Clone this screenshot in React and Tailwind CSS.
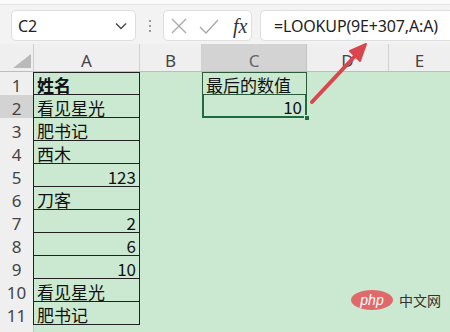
export default function App() {
  const rows = [
    { a: '姓名', bold: true },
    { a: '看见星光' },
    { a: '肥书记' },
    { a: '西木' },
    { a: '123', num: true },
    { a: '刀客' },
    { a: '2', num: true },
    { a: '6', num: true },
    { a: '10', num: true },
    { a: '看见星光' },
    { a: '肥书记' },
  ];
  const cjk = { fontFamily: '"Noto Sans CJK SC", "Noto Sans", sans-serif' };
  return (
    <div className="relative w-[450px] h-[332px] overflow-hidden bg-[#cbe8d0]" style={cjk}>
      {/* formula bar */}
      <div className="h-[44px] bg-[#f3f3f3] border-t-[4px] border-[#fafafa] flex items-start pt-[6px] pl-[11px] shadow-[inset_0_1px_0_#e4e4e4]">
        <div className="w-[125px] h-[31px] bg-white rounded-[5px] border border-[#dedede] flex items-center justify-between pl-[6px] pr-[8px]">
          <span className="text-[16px] text-[#222]" style={{ fontFamily: '"Noto Sans", sans-serif' }}>C2</span>
          <svg width="12" height="8" viewBox="0 0 12 8"><path d="M1 1.5 L6 6.5 L11 1.5" fill="none" stroke="#444" strokeWidth="1.3" /></svg>
        </div>
        <div className="w-[27px] h-[31px] flex flex-col items-center justify-center gap-[3px]">
          <div className="w-[2px] h-[2px] bg-[#9a9a9a]" />
          <div className="w-[2px] h-[2px] bg-[#9a9a9a]" />
          <div className="w-[2px] h-[2px] bg-[#9a9a9a]" />
        </div>
        <div className="w-[89px] h-[31px] bg-white rounded-[5px] border border-[#dedede] flex items-center pl-[7px]">
          <svg width="16" height="16" viewBox="0 0 16 16"><path d="M1 1 L15 15 M15 1 L1 15" stroke="#a8a8a8" strokeWidth="1.3" fill="none" /></svg>
          <svg className="ml-[12px]" width="20" height="16" viewBox="0 0 20 16"><path d="M1 9 L7 15 L19 2" stroke="#a8a8a8" strokeWidth="1.3" fill="none" /></svg>
          <span className="ml-[14px] text-[20px] italic text-[#333] leading-none" style={{ fontFamily: '"Liberation Serif", serif' }}>fx</span>
        </div>
        <div className="ml-[8px] flex-1 h-[31px] bg-white rounded-l-[5px] border border-r-0 border-[#dedede] flex items-center pl-[13px]">
          <span className="text-[16px] text-[#222] tracking-[-0.15px]" style={{ fontFamily: '"Noto Sans", sans-serif' }}>=LOOKUP(9E+307,A:A)</span>
        </div>
      </div>

      {/* column headers */}
      <div className="flex h-[28px] bg-[#efefef] border-b border-[#bdbdbd] text-[17px] text-[#444] leading-[20px]" style={{ fontFamily: '"Noto Sans", sans-serif' }}>
        <div className="w-[34px] border-r border-[#d0d0d0] relative">
          <svg className="absolute right-[2px] bottom-[3px]" width="18" height="14" viewBox="0 0 18 14"><path d="M18 0 L18 14 L0 14 Z" fill="#b9b9b9" /></svg>
        </div>
        <div className="w-[106px] border-r border-[#d0d0d0] flex items-center justify-center pt-[6px]">A</div>
        <div className="w-[62px] border-r border-[#d0d0d0] flex items-center justify-center pt-[6px]">B</div>
        <div className="w-[105px] bg-[#d3d3d3] border-r border-[#c4c4c4] flex items-center justify-center pt-[6px] text-[#666]">C</div>
        <div className="w-[82px] border-r border-[#d0d0d0] flex items-center justify-center pt-[6px]">D</div>
        <div className="flex-1 flex items-center justify-center pt-[6px]">E</div>
      </div>

      {/* rows */}
      {rows.map((r, i) => (
        <div key={i} className="flex h-[23px]">
          <div
            className={`w-[34px] flex items-center justify-center pt-[4px] text-[17px] leading-[18px] text-[#444] border-r border-[#222] ${i === 1 ? 'bg-[#d3d3d3]' : 'bg-[#efefef]'}`}
            style={{ fontFamily: '"Noto Sans", sans-serif' }}
          >
            {i + 1}
          </div>
          <div
            className={`w-[106px] border-r border-b border-[#222] flex items-center pt-[3px] px-[3px] text-[17px] text-[#111] leading-[18px] ${i === 0 ? 'border-t font-bold' : ''} ${r.num ? 'justify-end' : 'justify-start'}`}
          >
            {r.a}
          </div>
          <div className="w-[62px]" />
          {i === 0 ? (
            <div className="w-[105px] border border-[#2e5a3c] flex items-center pt-[3px] px-[3px] text-[17px] text-[#111] leading-[18px]">最后的数值</div>
          ) : i === 1 ? (
            <div className="w-[105px] relative border-2 border-t-0 border-[#1e6b3e] flex items-center justify-end pt-[2px] px-[3px] text-[17px] text-[#111] leading-[18px]">
              10
              <div className="absolute right-[-5px] bottom-[-5px] w-[6px] h-[6px] bg-[#1e6b3e] border border-[#cbe8d0]" />
            </div>
          ) : (
            <div className="w-[105px]" />
          )}
          <div className="flex-1" />
        </div>
      ))}
      <div className="flex h-[7px]">
        <div className="w-[34px] bg-[#efefef] border-r border-[#c4c4c4]" />
      </div>

      {/* arrow */}
      <svg className="absolute left-0 top-0 pointer-events-none" width="450" height="332" viewBox="0 0 450 332">
        <line x1="312" y1="102" x2="356" y2="55" stroke="#d9464d" strokeWidth="4" strokeLinecap="round" />
        <path d="M366 44 L350 51 L360 61 Z" fill="#d9464d" stroke="#d9464d" strokeWidth="2" strokeLinejoin="round" />
      </svg>

      {/* watermark */}
      <div className="absolute left-[351px] top-[290px] flex items-center">
        <div className="w-[42px] h-[20px] rounded-[50%] bg-[#e06a6a] flex items-center justify-center">
          <span className="text-[14px] italic text-white leading-none" style={{ fontFamily: '"Liberation Sans", sans-serif' }}>php</span>
        </div>
        <span className="ml-[6px] text-[14px] text-[#333] leading-none">中文网</span>
      </div>
    </div>
  );
}
